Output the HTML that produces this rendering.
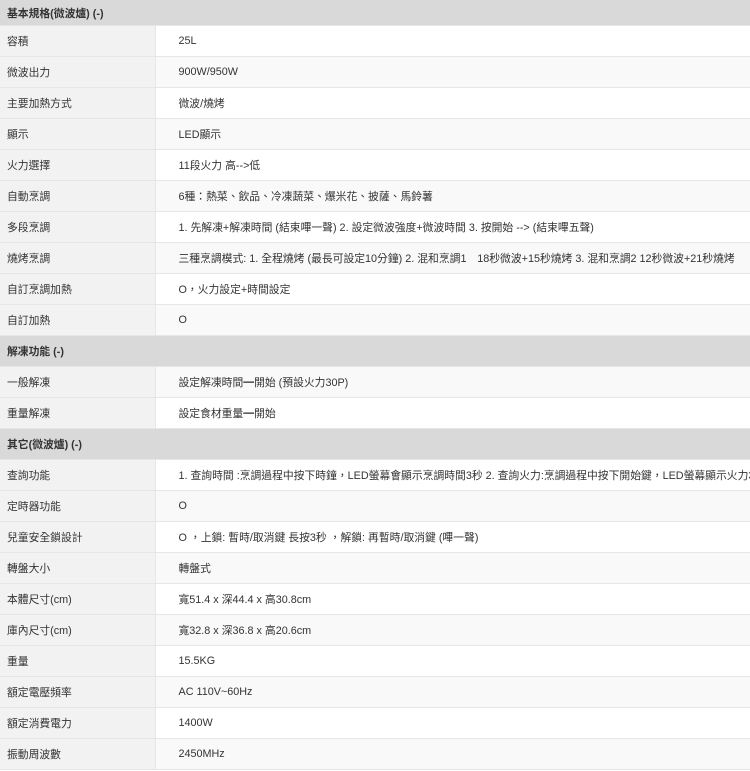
<!DOCTYPE html>
<html><head><meta charset="utf-8"><style>
body{margin:0;width:750px;height:771px;overflow:hidden;background:#fff;font-family:"Liberation Sans","Noto Sans CJK TC",sans-serif;font-size:10.8px;color:#333}
table{border-collapse:collapse;width:750px;table-layout:fixed}
td{height:30px;padding:0;border-bottom:1px solid #e6e6e6;white-space:nowrap;overflow:hidden;vertical-align:middle}
td.l{background:#f2f2f2;padding-left:7px;box-sizing:border-box;border-right:1px solid #e6e6e6}
td.v{padding-left:23px}
tr:nth-child(odd) td.v{background:#f9f9f9}
tr.h td{background:#d9d9d9;font-weight:bold;padding-left:7px;height:30px}
tr.h.f td{height:25px}
</style></head><body><table>
<colgroup><col style="width:155px"><col style="width:595px"></colgroup>
<tr class="h f"><td colspan="2">基本規格(微波爐) (-)</td></tr>
<tr><td class="l">容積</td><td class="v">25L</td></tr>
<tr><td class="l">微波出力</td><td class="v">900W/950W</td></tr>
<tr><td class="l">主要加熱方式</td><td class="v">微波/燒烤</td></tr>
<tr><td class="l">顯示</td><td class="v">LED顯示</td></tr>
<tr><td class="l">火力選擇</td><td class="v">11段火力 高--&gt;低</td></tr>
<tr><td class="l">自動烹調</td><td class="v">6種：熱菜、飲品、冷凍蔬菜、爆米花、披薩、馬鈴薯</td></tr>
<tr><td class="l">多段烹調</td><td class="v">1. 先解凍+解凍時間 (結束嗶一聲) 2. 設定微波強度+微波時間 3. 按開始 --&gt; (結束嗶五聲)</td></tr>
<tr><td class="l">燒烤烹調</td><td class="v">三種烹調模式: 1. 全程燒烤 (最長可設定10分鐘) 2. 混和烹調1　18秒微波+15秒燒烤 3. 混和烹調2 12秒微波+21秒燒烤</td></tr>
<tr><td class="l">自訂烹調加熱</td><td class="v">O，火力設定+時間設定</td></tr>
<tr><td class="l">自訂加熱</td><td class="v">O</td></tr>
<tr class="h"><td colspan="2">解凍功能 (-)</td></tr>
<tr><td class="l">一般解凍</td><td class="v">設定解凍時間<b>━</b>開始 (預設火力30P)</td></tr>
<tr><td class="l">重量解凍</td><td class="v">設定食材重量<b>━</b>開始</td></tr>
<tr class="h"><td colspan="2">其它(微波爐) (-)</td></tr>
<tr><td class="l">查詢功能</td><td class="v">1. 查詢時間 :烹調過程中按下時鐘，LED螢幕會顯示烹調時間3秒 2. 查詢火力:烹調過程中按下開始鍵，LED螢幕顯示火力3秒</td></tr>
<tr><td class="l">定時器功能</td><td class="v">O</td></tr>
<tr><td class="l">兒童安全鎖設計</td><td class="v">O ，上鎖: 暫時/取消鍵 長按3秒 ，解鎖: 再暫時/取消鍵 (嗶一聲)</td></tr>
<tr><td class="l">轉盤大小</td><td class="v">轉盤式</td></tr>
<tr><td class="l">本體尺寸(cm)</td><td class="v">寬51.4 x 深44.4 x 高30.8cm</td></tr>
<tr><td class="l">庫內尺寸(cm)</td><td class="v">寬32.8 x 深36.8 x 高20.6cm</td></tr>
<tr><td class="l">重量</td><td class="v">15.5KG</td></tr>
<tr><td class="l">額定電壓頻率</td><td class="v">AC 110V~60Hz</td></tr>
<tr><td class="l">額定消費電力</td><td class="v">1400W</td></tr>
<tr><td class="l">振動周波數</td><td class="v">2450MHz</td></tr>
</table></body></html>
